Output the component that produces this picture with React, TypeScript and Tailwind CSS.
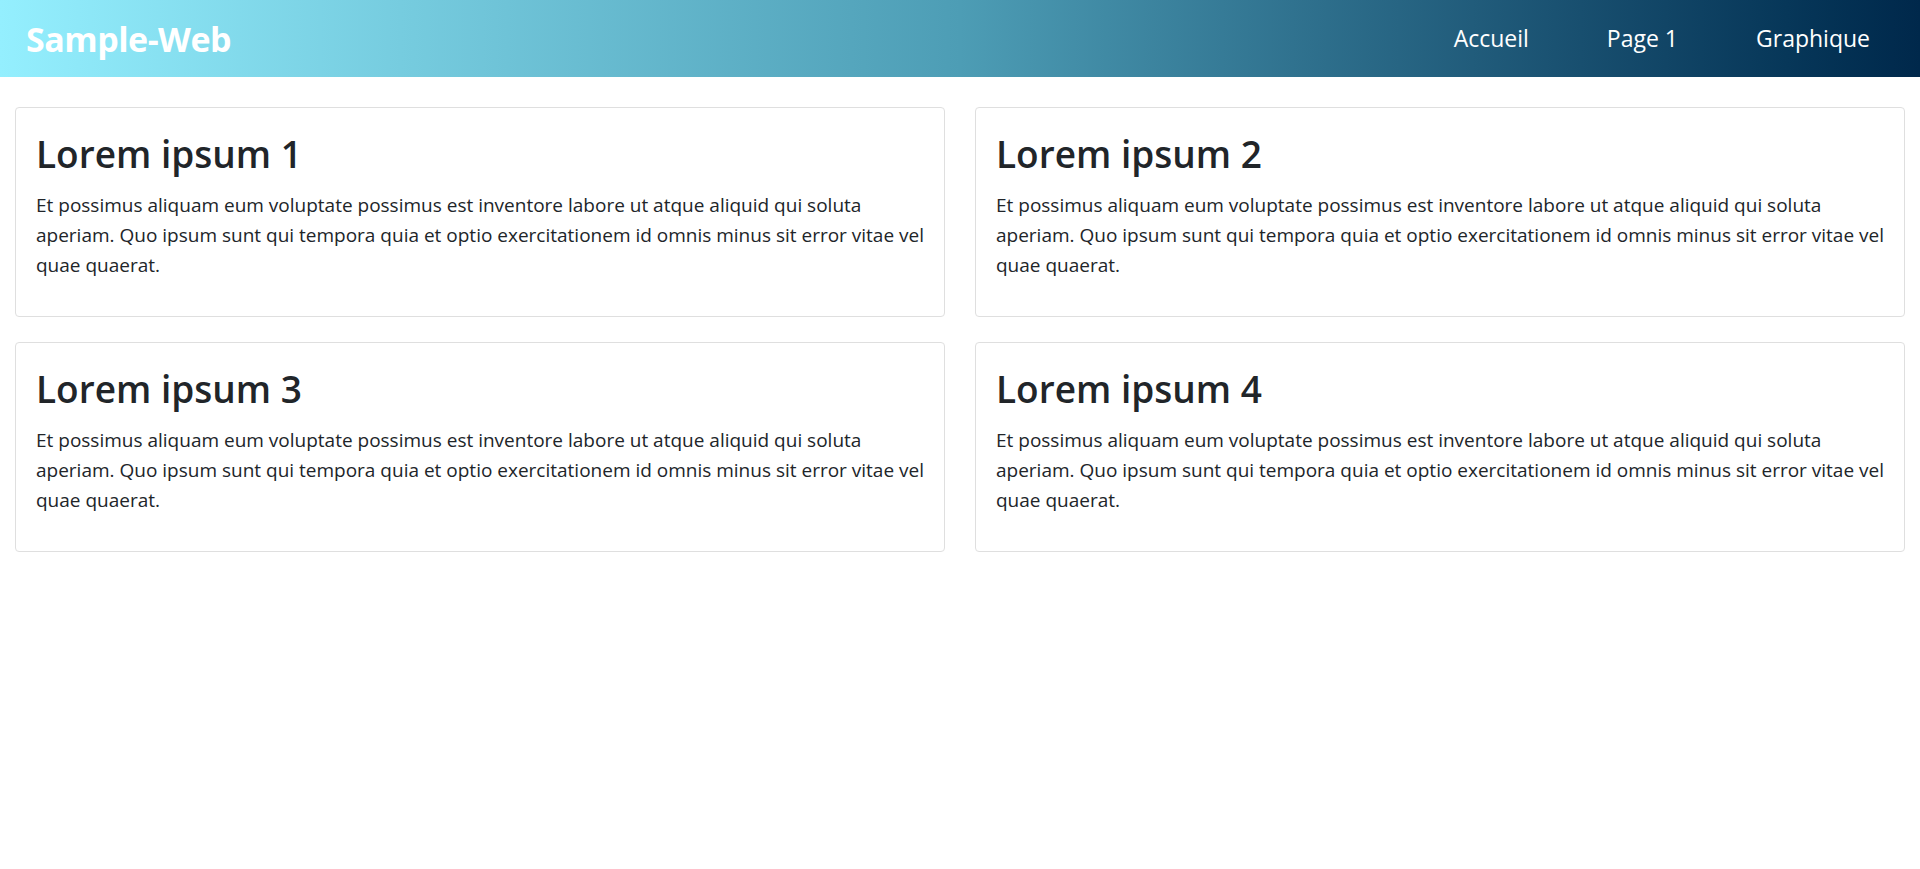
const cards = [
  { id: 1, title: "Lorem ipsum 1" },
  { id: 2, title: "Lorem ipsum 2" },
  { id: 3, title: "Lorem ipsum 3" },
  { id: 4, title: "Lorem ipsum 4" },
];

const text =
  "Et possimus aliquam eum voluptate possimus est inventore labore ut atque aliquid qui soluta aperiam. Quo ipsum sunt qui tempora quia et optio exercitationem id omnis minus sit error vitae vel quae quaerat.";

const links = ["Accueil", "Page 1", "Graphique"];

export default function App() {
  return (
    <div className="min-h-screen bg-white font-['Open_Sans',sans-serif] text-[#212529]">
      {/* Navbar */}
      <header className="h-[77px] flex items-center justify-between pl-[26px] pr-[50px] bg-linear-to-r from-[#94effe] via-[#4d9db5] to-[#00284b]">
        <a href="#" className="text-[34px] font-bold text-white leading-none tracking-[-0.5px]">
          Sample-Web
        </a>
        <nav className="flex items-center gap-[78px]">
          {links.map((l) => (
            <a key={l} href="#" className="text-[23px] text-white leading-none">
              {l}
            </a>
          ))}
        </nav>
      </header>

      {/* Cards */}
      <main className="px-[15px] pt-[30px] grid grid-cols-2 gap-x-[30px] gap-y-[25px]">
        {cards.map((c) => (
          <div key={c.id} className="border border-[#dfdfdf] rounded-[4px] px-5 pt-5 pb-5">
            <h1 className="text-[37px] font-semibold leading-[48px] mt-[2px] mb-[12px]">{c.title}</h1>
            <p className="text-[19px] leading-[30px] mb-[16px]">{text}</p>
          </div>
        ))}
      </main>
    </div>
  );
}
